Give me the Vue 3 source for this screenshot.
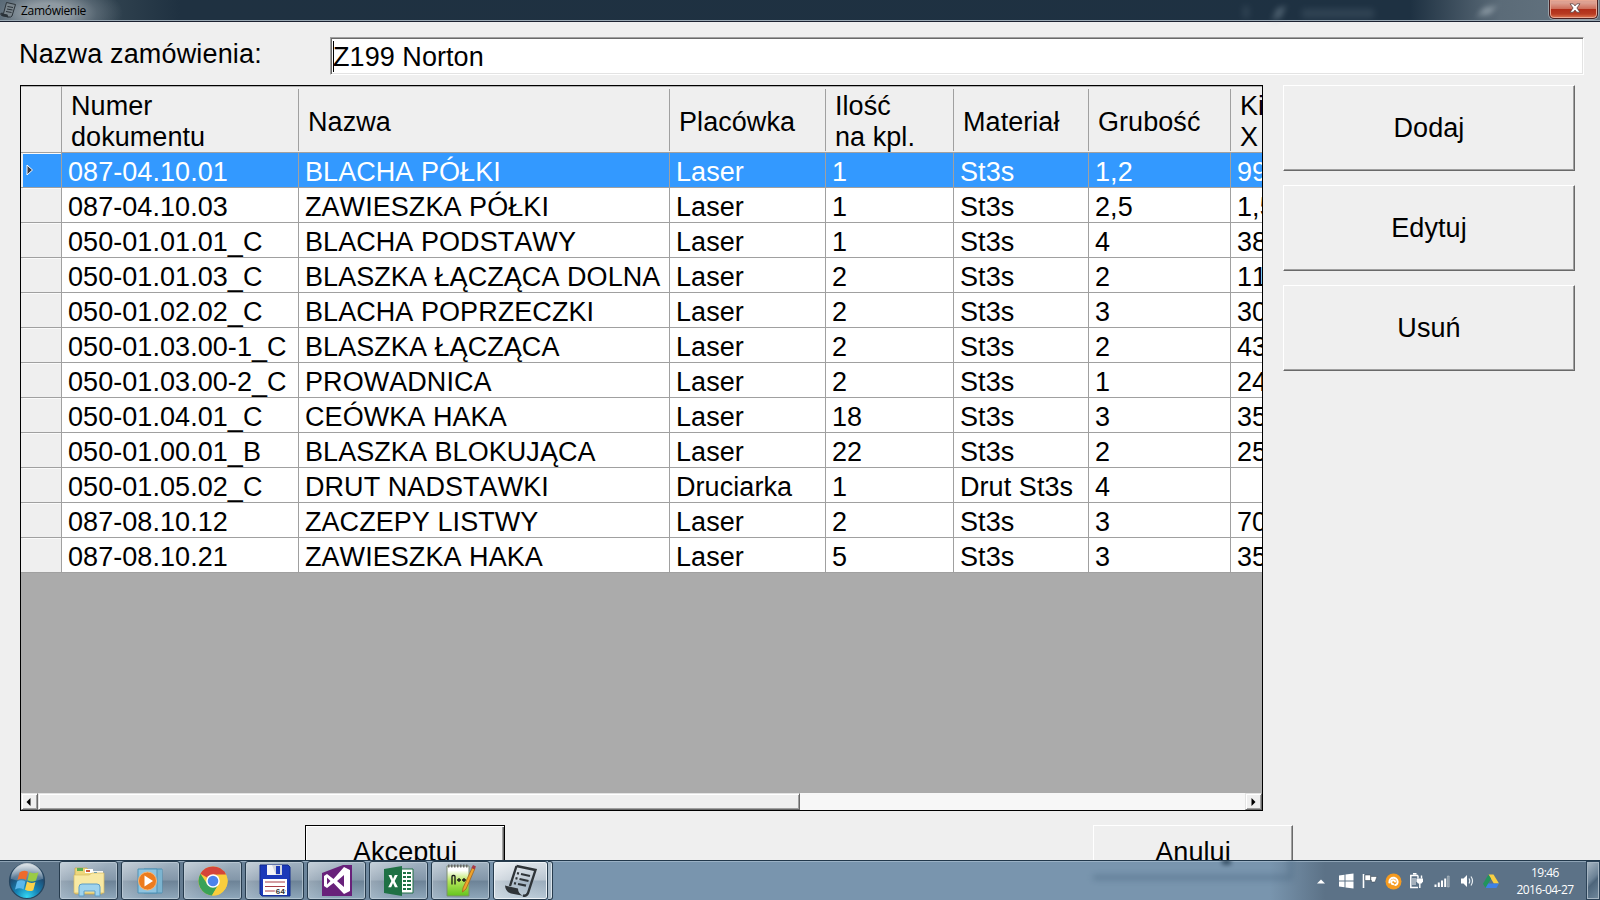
<script setup>
const columns = [
  ['Numer', 'dokumentu'],
  ['Nazwa'],
  ['Placówka'],
  ['Ilość', 'na kpl.'],
  ['Materiał'],
  ['Grubość'],
  ['Ki', 'X'],
]

const rows = [
  ['087-04.10.01', 'BLACHA PÓŁKI', 'Laser', '1', 'St3s', '1,2', '99'],
  ['087-04.10.03', 'ZAWIESZKA PÓŁKI', 'Laser', '1', 'St3s', '2,5', '1,5'],
  ['050-01.01.01_C', 'BLACHA PODSTAWY', 'Laser', '1', 'St3s', '4', '38'],
  ['050-01.01.03_C', 'BLASZKA ŁĄCZĄCA DOLNA', 'Laser', '2', 'St3s', '2', '11'],
  ['050-01.02.02_C', 'BLACHA POPRZECZKI', 'Laser', '2', 'St3s', '3', '30'],
  ['050-01.03.00-1_C', 'BLASZKA ŁĄCZĄCA', 'Laser', '2', 'St3s', '2', '43'],
  ['050-01.03.00-2_C', 'PROWADNICA', 'Laser', '2', 'St3s', '1', '24'],
  ['050-01.04.01_C', 'CEÓWKA HAKA', 'Laser', '18', 'St3s', '3', '35'],
  ['050-01.00.01_B', 'BLASZKA BLOKUJĄCA', 'Laser', '22', 'St3s', '2', '25'],
  ['050-01.05.02_C', 'DRUT NADSTAWKI', 'Druciarka', '1', 'Drut St3s', '4', ''],
  ['087-08.10.12', 'ZACZEPY LISTWY', 'Laser', '2', 'St3s', '3', '70'],
  ['087-08.10.21', 'ZAWIESZKA HAKA', 'Laser', '5', 'St3s', '3', '35'],
]
</script>

<template>
  <div class="screen">
    <header class="titlebar">
      <svg class="app-icon" width="17" height="18" viewBox="0 0 34 34">
        <path d="M13 2 L31 6 L24 29 Q22 32 17 31 L3 28 Q0 25 3 23 L7 24 Z" fill="#7a858c" stroke="#2a3238" stroke-width="2" />
        <path d="M15 10l11 2M14 15l11 2M12 20l11 2" stroke="#2a3238" stroke-width="2" />
        <path d="M1 23 L15 26 L17 32 L4 29Z" fill="#2a3238" />
      </svg>
      <span class="title">Zamówienie</span>
      <i class="smudge s1"></i><i class="smudge s2"></i><i class="smudge s3"></i><i class="smudge s4"></i>
      <div class="close">
        <svg width="12" height="10" viewBox="0 0 12 10">
          <path d="M1 .8h3.200L6 2.900 7.800 .8H11L7.900 5 11 9.200H7.800L6 7.100 4.200 9.200H1L4.100 5z" fill="#fff" stroke="#5a4444" stroke-width=".8" />
        </svg>
      </div>
    </header>

    <main class="client">
      <div class="name-row">
        <label>Nazwa zamówienia:</label>
        <div class="field"><span class="caret"></span>Z199 Norton</div>
      </div>

      <div class="middle">
        <div class="grid">
          <div class="line head">
            <div class="rowhead"></div>
            <div v-for="(c, i) in columns" :key="i" class="hcell" :class="{ single: c.length === 1 }">
              <span v-for="t in c" :key="t">{{ t }}</span>
            </div>
          </div>
          <div v-for="(r, i) in rows" :key="i" class="line row" :class="{ selected: i === 0 }">
            <div class="rowhead">
              <svg v-if="i === 0" width="8" height="12" viewBox="0 0 8 12">
                <path d="M1 1v10l5.500-5z" fill="#3c3c46" stroke="#fff" stroke-width="1" />
              </svg>
            </div>
            <div v-for="(t, j) in r" :key="j" class="cell">{{ t }}</div>
          </div>
          <div class="void"></div>
          <div class="scroll">
            <div class="sbtn left"><svg width="5" height="8" viewBox="0 0 5 8"><path d="M4.500 0v8L.5 4z" fill="#000" /></svg></div>
            <div class="thumb"></div>
            <div class="track"></div>
            <div class="sbtn"><svg width="5" height="8" viewBox="0 0 5 8"><path d="M.5 0v8l4-4z" fill="#000" /></svg></div>
          </div>
        </div>
        <aside class="actions">
          <div class="btn">Dodaj</div>
          <div class="btn">Edytuj</div>
          <div class="btn">Usuń</div>
        </aside>
      </div>

      <div class="bottom">
        <div class="btn default">Akceptuj</div>
        <div class="btn">Anuluj</div>
      </div>
    </main>

    <footer class="taskbar">
      <i class="ghost"></i><i class="ghost-text"></i>
      <div class="start">
        <svg width="38" height="38" viewBox="0 0 38 38">
          <defs>
            <radialGradient id="orb" cx=".5" cy=".95" r=".95">
              <stop offset="0" stop-color="#35d6f2" /><stop offset=".35" stop-color="#1583b5" /><stop offset=".7" stop-color="#1f4a70" /><stop offset="1" stop-color="#8fa5b5" />
            </radialGradient>
            <linearGradient id="gloss" x1="0" y1="0" x2="0" y2="1">
              <stop offset="0" stop-color="#fff" stop-opacity=".75" /><stop offset="1" stop-color="#fff" stop-opacity=".15" />
            </linearGradient>
          </defs>
          <circle cx="19" cy="19" r="17.500" fill="url(#orb)" stroke="#26455f" stroke-width="1.200" />
          <path d="M3 17a16 16 0 0 1 32 0q-16 5-32 0z" fill="url(#gloss)" />
          <path d="M11.500 10.500q4-3 8.500-.8l-2 8.300q-4-2.500-8.500 0z" fill="#ee6a2c" />
          <path d="M21.500 10q4 2.500 9 .3l-2.500 8.200q-4 2-8.500-.3z" fill="#9acb45" />
          <path d="M9 19.500q4-2.500 8.500 0l-2 8q-4-2.500-8.500 0z" fill="#5cb8ec" />
          <path d="M19 19.500q4 2.500 8.500.5l-2.200 8.200q-4 2-8.300-.5z" fill="#fbd24a" />
        </svg>
      </div>

      <div class="task">
        <svg width="34" height="32" viewBox="0 0 34 32">
          <path d="M3 3h12l2 4h13v22H3z" fill="#eed77c" stroke="#c8a64c" stroke-width=".7" />
          <path d="M5 3h6v3H5z" fill="#5dad50" /><path d="M13 4h8v4h-8z" fill="#fff" /><path d="M14 5h4v2h-4z" fill="#cf5a37" />
          <path d="M21 6h10v4H21z" fill="#f7f7f2" /><path d="M22 7h3v2h-3z" fill="#3b8fd0" />
          <path d="M2 10h15l3-2h12v20H2z" fill="#f8e9a4" stroke="#d9bb63" stroke-width=".7" />
          <path d="M7 31V22q0-3 3-3h15q3 0 3 3v9h-5v-5H12v5z" fill="#9ed3ee" stroke="#5c9cc6" stroke-width="1" />
        </svg>
      </div>
      <div class="task">
        <svg width="30" height="30" viewBox="0 0 30 30">
          <path d="M8 3h18v24H8z" fill="#a9d7ec" stroke="#4e91b4" />
          <path d="M22 3v24M24 3v24" stroke="#4e91b4" />
          <path d="M2 3h19v24H2z" fill="#8fc4e0" stroke="#4e91b4" />
          <circle cx="11.500" cy="15" r="9" fill="#ec7c1f" stroke="#f7b675" stroke-width="1" />
          <path d="M8.500 9.500v11l8.500-5.500z" fill="#fff" />
        </svg>
      </div>
      <div class="task">
        <svg width="30" height="30" viewBox="0 0 30 30">
          <circle cx="15" cy="15" r="14.500" fill="#f9cd3c" />
          <path d="M15 15 L2.440 7.750 A14.500 14.500 0 0 1 27.560 7.750 L15 8.500Z" fill="#d5453a" />
          <path d="M2.440 7.750 A14.500 14.500 0 0 0 14 29.500 L20.600 18.300 L15 15 L9.400 18.200Z" fill="#3aa257" />
          <path d="M27.560 7.750 A14.500 14.500 0 0 1 14 29.500L20.600 18.300L19 8.500Z" fill="#f9cd3c" />
          <path d="M15 8.500H27.900L26 5Z" fill="#d5453a" />
          <circle cx="15" cy="15" r="6.800" fill="#fff" /><circle cx="15" cy="15" r="5.300" fill="#4b83ec" />
        </svg>
      </div>
      <div class="task">
        <svg width="32" height="33" viewBox="0 0 32 33">
          <path d="M1 1h28l2 2v29H3l-2-2z" fill="#1b39b9" stroke="#102a8c" />
          <path d="M8 1h15v10H8z" fill="#d2d5de" /><path d="M8 1h5l4 10H8z" fill="#f5f5f8" /><path d="M17 2h4v8h-4z" fill="#1b39b9" />
          <path d="M4 15h24v16H4z" fill="#fff" />
          <path d="M6 18h20M6 22.500h20M6 27h21" stroke="#a73d47" stroke-width="1" />
          <text x="16.500" y="29.500" class="floppy">64</text>
        </svg>
      </div>
      <div class="task">
        <svg width="30" height="31" viewBox="0 0 30 31">
          <path d="M0 8 L21 0H30V31H0z" fill="#68217a" />
          <path fill-rule="evenodd" d="M2 11l3-2 6.500 5L22 2l6 3v21l-6 3-10.500-11L5 23l-3-2zM5 12.500v7l3.500-3.500zM22 10l-7 6 7 6z" fill="#fff" />
        </svg>
      </div>
      <div class="task">
        <svg width="30" height="32" viewBox="0 0 30 32">
          <path d="M16 4h13v24H16z" fill="#fff" stroke="#1f7145" />
          <path d="M19 8h8M19 12h8M19 16h8M19 20h8M19 24h8" stroke="#1f7145" stroke-width="2.200" /><path d="M22.500 6v20" stroke="#fff" />
          <path d="M0 4l18-3v30L0 28z" fill="#1f7145" />
          <path d="M4.500 10h3L9 14l1.800-4h3L10.700 16l3.200 6.300h-3L9 18.100 7.200 22.300h-3L7.400 16z" fill="#fff" />
        </svg>
      </div>
      <div class="task">
        <svg width="32" height="33" viewBox="0 0 32 33">
          <defs><linearGradient id="npp" x1="0" y1="0" x2="0" y2="1"><stop offset=".15" stop-color="#fff" /><stop offset=".5" stop-color="#b5e65a" /><stop offset="1" stop-color="#63c41d" /></linearGradient></defs>
          <path d="M2 2h22v30H2z" fill="url(#npp)" stroke="#7c8b74" />
          <path d="M3 2h20" stroke="#666" stroke-width="3" stroke-dasharray="1.500 1.500" />
          <path d="M7 20.500V12.500q0-1 1-1h1q1 0 1 1V20.500M12 16h4M14 14v4M17 16h4M19 14v4" fill="none" stroke="#171717" stroke-width="1.300" />
          <path d="M18 24 L27.500 3 L30 4.500 L21 25 L17.500 28z" fill="#efa32b" stroke="#a3641d" stroke-width=".8" />
          <path d="M26.500 4l1.500-3 3 1.500-1.500 3z" fill="#a73945" />
        </svg>
      </div>
      <div class="task active">
        <svg width="34" height="34" viewBox="0 0 34 34">
          <path d="M12.500 2 L31.500 6 L24 29 Q22.500 32.500 19 31.500 M12.500 2L6 22" fill="none" stroke="#2f3438" stroke-width="2.400" />
          <path d="M1 21.500 L14 24.500 Q14 29.500 19 31.800 L7 29.500 Q1.500 28 1 21.500z" fill="#2f3438" />
          <path d="M17 10l9 2M15.500 15l9 2M14 20l8 1.700" stroke="#2f3438" stroke-width="2.200" />
          <path d="M13 9.100l2 .5M11.500 14.100l2 .5M10 19.100l2 .5" stroke="#2f3438" stroke-width="2.200" />
        </svg>
      </div>
      <div class="stack-edge"></div>

      <div class="tray">
        <svg class="t-up" width="8" height="5" viewBox="0 0 8 5"><path d="M0 4.500 4 .5l4 4z" fill="#fff" /></svg>
        <svg class="t-win" width="16" height="16" viewBox="0 0 16 16"><path d="M1 2.600l5.500-.8v5.700H1zM7.500 1.600 15.500.6v6.900H7.500zM1 8.500h5.500v5.700L1 13.400zM7.500 8.500h8v6.900l-8-1z" fill="#fff" /></svg>
        <svg class="t-flag" width="16" height="16" viewBox="0 0 16 16"><path d="M1.500 1v14" stroke="#fff" stroke-width="1.600" /><path d="M3 2h5.500v1.500H15L13 9H9.500V7.500H3z" fill="#fff" stroke="#333f49" stroke-width=".5" /><path d="M8.700 3.500v4.500" stroke="#4a5a68" stroke-width="1" /></svg>
        <svg class="t-avast" width="17" height="17" viewBox="0 0 17 17"><circle cx="8.500" cy="8.500" r="8" fill="#f59b20" /><path d="M4.300 9.500a4.200 4.200 0 1 1 7.900 1.300q-.6 1.200-2 1.200M8.200 11.200a2 2 0 1 1 2-2.600" fill="none" stroke="#fff" stroke-width="1.900" stroke-linecap="round" /></svg>
        <svg class="t-power" width="15" height="16" viewBox="0 0 15 16"><path d="M9 2.500H1.800v12H9M4 .8h3.500" fill="none" stroke="#fff" stroke-width="1.500" /><path d="M4 5v7M6 5v7" stroke="#fff" stroke-width=".9" /><path d="M7.500 5.500h6.500v3l-1.500 2H9L7.500 8.500z" fill="#fff" /><path d="M9 2.500v3M12.500 2.500v3M10.800 10v5" stroke="#fff" stroke-width="1.400" /></svg>
        <svg class="t-net" width="16" height="13" viewBox="0 0 16 13"><path d="M.5 9.500h2V12h-2zM3.800 7.500h2V12h-2zM7 5.500h2V12H7zM10.200 3.500h2V12h-2z" fill="#fff" /><path d="M13.400 1h1.800v11h-1.800z" fill="#8797a4" stroke="#c5ced5" stroke-width=".5" /></svg>
        <svg class="t-vol" width="14" height="14" viewBox="0 0 14 14"><path d="M1 4.500h2.500L7 1v12L3.500 9.500H1z" fill="#fff" /><path d="M9 4.500q1.500 2.500 0 5M11 2.500q3 4.500 0 9" fill="none" stroke="#e8eef2" stroke-width="1.200" /></svg>
        <svg class="t-drive" width="16" height="15" viewBox="0 0 16 15"><path d="M5.500.5h5L16 9.500h-5.200z" fill="#f9cf42" /><path d="M5.500.5 8 4.800 2.600 14 0 9.700z" fill="#23945c" /><path d="M5.200 9.500H16L13.400 14H2.600z" fill="#3f80e6" /></svg>
      </div>
      <div class="clock"><span>19:46</span><span>2016-04-27</span></div>
      <div class="peek"></div>
    </footer>
  </div>
</template>

<style>
html, body { margin: 0; overflow: hidden; }
</style>

<style scoped>
.screen { box-sizing: border-box; width: 1600px; height: 900px; overflow: hidden; display: flex; flex-direction: column; background: #efefef; color: #000; font: 27px/31px "Liberation Sans", Arial, sans-serif; font-kerning: none; letter-spacing: .06px; white-space: nowrap; }
.screen * { box-sizing: border-box; }
svg { display: block; flex: none; }

.titlebar { position: relative; height: 22px; flex: none; display: flex; align-items: center; border-bottom: 1px solid #1b2130; box-shadow: inset 0 -1px #9aa8b3; background: radial-gradient(ellipse 75px 32px at 48px 13px, #8f9aa2 0 30%, #6c7a8599 65%, transparent 100%), linear-gradient(90deg, #4b5d6b 0, #30424f 110px, #1f3141 180px, #1e3142 1410px, #5b6b78 1500px, #657581 1600px); }
.app-icon { margin-top: -1px; }
.title { margin-left: 4px; font: 12px/20px "Open Sans", "Noto Sans", sans-serif; letter-spacing: -.3px; height: 20px; }
.smudge { position: absolute; background: #7a8d9b; filter: blur(3px); opacity: .5; }
.s1 { left: 1243px; top: 6px; width: 6px; height: 12px; opacity: .2; }
.s2 { left: 1275px; top: 7px; width: 8px; height: 12px; transform: skewX(-20deg); }
.s3 { left: 1302px; top: 9px; width: 72px; height: 9px; opacity: .2; }
.s4 { left: 1481px; top: 7px; width: 12px; height: 8px; background: #c0cbd2; transform: skewX(-30deg); }
.close { position: absolute; left: 1549px; top: 0; width: 49px; height: 19px; border: 1px solid #4a2021; border-top: 0; border-radius: 0 0 5px 5px; box-shadow: inset 0 0 0 1px #e8a793, 0 0 0 1px #98a2a9; background: linear-gradient(#dda091 0 3px, #cc6b57 9px, #b02d19 9px, #b83b22 14px, #df7952 18px); display: flex; justify-content: center; padding: 3px 0 0 2px; }

.client { flex: none; height: 838px; overflow: hidden; display: flex; flex-direction: column; background: #efefef; }
.name-row { display: flex; margin-top: 15px; height: 38px; flex: none; }
.name-row label { width: 330px; padding: 2px 0 0 19px; letter-spacing: .16px; }
.field { position: relative; width: 1254px; height: 38px; padding: 4px 0 0 2px; background: #fff; border: 1px solid; border-color: #a0a0a0 #fff #fff #a0a0a0; box-shadow: inset 1px 1px #696969, inset -1px -1px #e3e3e3; }
.caret { position: absolute; left: 2px; top: 3px; width: 1px; height: 31px; background: #000; }

.middle { display: flex; margin-top: 10px; height: 726px; padding-left: 20px; flex: none; }
.grid { width: 1243px; height: 726px; border: 1px solid #000; overflow: hidden; display: flex; flex-direction: column; background: #fff; }
.line { display: grid; grid-template-columns: 41px 237px 371px 156px 128px 135px 142px 31px; flex: none; width: 1241px; overflow: hidden; }
.head { height: 67px; background: #efefef; border-bottom: 1px solid #a0a0a0; box-shadow: inset 0 1px #b0b0b0; }
.head .rowhead { border-right: 1px solid #a0a0a0; height: 66px; }
.hcell { display: flex; flex-direction: column; justify-content: center; padding: 5px 0 0 9px; height: 66px; background: linear-gradient(#a0a0a0, #a0a0a0) right 0 top 3px / 1px 62px no-repeat; }
.hcell.single { padding-top: 7px; }
.hcell span { display: block; height: 31px; }
.row { height: 35px; }
.rowhead { display: flex; align-items: center; }
.row .rowhead { background: #efefef; border-right: 1px solid #a0a0a0; border-bottom: 1px solid #a0a0a0; padding-left: 5px; box-shadow: inset 2px 0 #efefef, inset 0 1px #fafafa; }
.cell { border-right: 1px solid #a0a0a0; border-bottom: 1px solid #a0a0a0; padding: 4px 0 0 6px; height: 35px; line-height: 30px; }
.selected .rowhead, .selected .cell { background: #3399ff; color: #fff; }
.hcell:last-child, .cell:last-child { border-right: 0; background-image: none; }
.void { flex: 1; background: #ababab; }
.scroll { display: flex; height: 17px; flex: none; }
.sbtn { width: 17px; height: 17px; display: flex; align-items: center; justify-content: center; background: #efefef; border: 1px solid; border-color: #e3e3e3 #696969 #696969 #e3e3e3; box-shadow: inset 1px 1px #fff, inset -1px -1px #a0a0a0; }
.sbtn.left { padding-right: 3px; }
.thumb { width: 762px; height: 17px; background: #efefef; border: 1px solid; border-color: #e3e3e3 #696969 #696969 #e3e3e3; box-shadow: inset 1px 1px #fff, inset -1px -1px #a0a0a0; }
.track { flex: 1; background: #f7f7f7; }

.actions { margin-left: 20px; display: flex; flex-direction: column; gap: 14px; }
.btn { display: flex; align-items: center; justify-content: center; width: 292px; height: 86px; background: #efefef; border: 1px solid; border-color: #fff #696969 #696969 #fff; box-shadow: inset -1px -1px #a0a0a0; }
.bottom { display: flex; margin-top: 14px; padding-left: 305px; gap: 588px; }
.bottom .btn { width: 200px; height: 54px; flex: none; }
.btn.default { border-color: #000; box-shadow: inset 1px 1px #fff, inset -1px -1px #696969, inset -2px -2px #a0a0a0; }

.taskbar { position: relative; height: 40px; flex: none; display: flex; overflow: hidden; border-top: 1px solid #22384b; background: linear-gradient(#b0c4d499 0 1px, transparent 1px), linear-gradient(90deg, #5d7387 0 60px, #7995ae 550px, #7995ae 1270px, #5c7287 1325px, #5c7287 1600px); }
.ghost { position: absolute; left: 1093px; top: -12px; width: 200px; height: 31px; border: solid #526f88; border-width: 0 4px 5px 0; filter: blur(3px); opacity: .6; }
.ghost-text { position: absolute; left: 1222px; top: -3px; width: 9px; height: 7px; background: #243c50; filter: blur(2px); opacity: .7; }
.start { width: 59px; padding: 1px 0 0 8px; flex: none; }
.task { width: 59px; height: 39px; margin-right: 3px; flex: none; display: flex; align-items: center; justify-content: center; border: 1px solid #263b4d; border-radius: 3px; box-shadow: inset 0 0 0 1px #c3d0dbaa; background: linear-gradient(125deg, #ffffff66 0, #ffffff22 40%, transparent 60%), linear-gradient(#a0b1c0 0, #8397a9 48%, #6d8397 52%, #8fa8bb 100%); }
.task.active { width: 55px; margin-right: 0; background: linear-gradient(125deg, #ffffff99 0, #ffffff33 50%, transparent), linear-gradient(#d2dae2 0, #b3c0cc 48%, #93a6b7 52%, #b8c9d6 100%); box-shadow: inset 0 0 0 1px #edf2f6; }
.stack-edge { width: 5px; height: 39px; flex: none; border: 1px solid #263b4d; border-left: 0; border-radius: 0 3px 3px 0; background: #a9bac8; box-shadow: inset -1px 0 #dbe4eb; }
.floppy { font: bold 8px "Liberation Mono", monospace; fill: #333; stroke: #fff; stroke-width: 2px; paint-order: stroke; }
.tray { position: absolute; left: 1317px; top: 0; height: 39px; width: 190px; display: flex; align-items: center; padding-top: 1px; }
.t-win { margin-left: 13px; }
.t-flag { margin-left: 8px; }
.t-avast { margin-left: 7px; }
.t-power { margin-left: 7px; }
.t-net { margin-left: 10px; }
.t-vol { margin-left: 10px; }
.t-drive { margin-left: 9px; }
.clock { position: absolute; left: 1505px; top: 3px; width: 80px; display: flex; flex-direction: column; align-items: center; color: #fff; font: 12px/17px "Open Sans", "Noto Sans", sans-serif; letter-spacing: -.55px; }
.peek { position: absolute; left: 1586px; top: 0; width: 14px; height: 39px; border: 1px solid #2b4257; box-shadow: inset 0 0 0 1px #a6b5c2; background: linear-gradient(135deg, #a9b8c4, #6c8296 45%, #4d657b 55%, #71899d); }
</style>
